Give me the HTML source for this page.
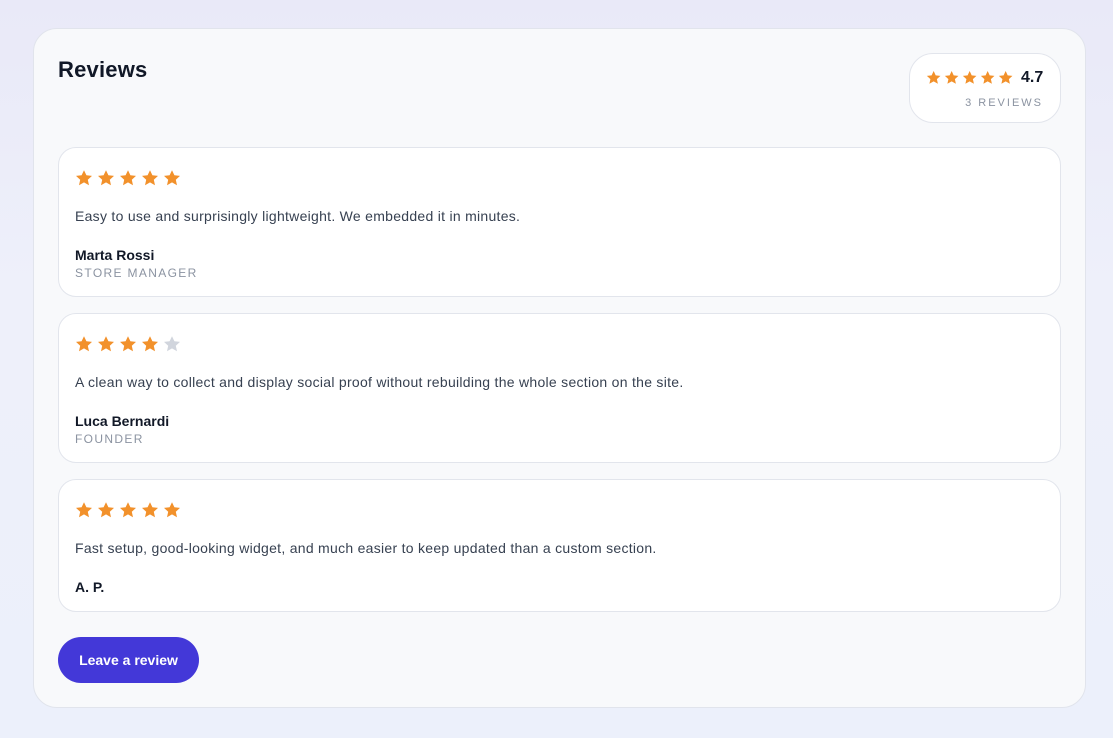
<!DOCTYPE html>
<html><head><meta charset="utf-8"><style>
*{margin:0;padding:0;box-sizing:border-box}
body{width:1113px;height:738px;overflow:hidden;font-family:"Liberation Sans",sans-serif;background:linear-gradient(180deg,#e9e9f8 0%,#eef0fa 40%,#ecf0fb 100%);position:relative}
.card{position:absolute;left:33px;top:28px;width:1053px;height:680px;background:#f8f9fb;border:1px solid #e1e4ec;border-radius:24px}
h1{position:absolute;left:58px;top:57px;font-size:22px;font-weight:bold;color:#111827;letter-spacing:0.2px}
.sum{position:absolute;left:909px;top:53px;width:152px;height:70px;background:#fff;border:1px solid #e2e5ec;border-radius:24px}
.rv{position:absolute;left:58px;width:1003px;background:#fff;border:1px solid #e2e5ec;border-radius:18px}
.t{position:absolute;left:16px;font-size:14px;color:#374151;letter-spacing:0.28px;top:60px}
.n{position:absolute;left:16px;font-size:14px;font-weight:bold;color:#111827;top:99px}
.r{position:absolute;left:16px;font-size:12px;letter-spacing:1.35px;color:#8b93a1;top:118px}
.btn{position:absolute;left:58px;top:637px;width:141px;height:46px;border-radius:23px;background:#4338d8;color:#fff;font-size:14px;font-weight:bold;text-align:center;line-height:47px}
</style></head><body>
<svg width="0" height="0" style="position:absolute"><defs><path id="s" d="M9 1.2l2.4 5.1 5.6.6-4.2 3.8 1.2 5.5L9 13.4 4 16.2l1.2-5.5L1 6.9l5.6-.6z"/></defs></svg>
<div class="card"></div>
<h1>Reviews</h1>
<div class="sum">
<svg style="position:absolute;left:16px;top:16px" width="92" height="18"><g fill="#f2912b"><use href="#s" transform="scale(.85)"/><use href="#s" transform="translate(18 0) scale(.85)"/><use href="#s" transform="translate(36 0) scale(.85)"/><use href="#s" transform="translate(54 0) scale(.85)"/><use href="#s" transform="translate(72 0) scale(.85)"/></g></svg>
<div style="position:absolute;left:111px;top:15px;font-size:16px;font-weight:bold;color:#111827">4.7</div>
<div style="position:absolute;right:17px;top:43px;font-size:11px;letter-spacing:2px;color:#8b93a1">3 REVIEWS</div>
</div>

<div class="rv" style="top:147px;height:150px">
<svg style="position:absolute;left:16px;top:21px" width="110" height="18"><g fill="#f2912b"><use href="#s"/><use href="#s" x="22"/><use href="#s" x="44"/><use href="#s" x="66"/><use href="#s" x="88"/></g></svg>
<div class="t">Easy to use and surprisingly lightweight. We embedded it in minutes.</div>
<div class="n">Marta Rossi</div>
<div class="r">STORE MANAGER</div>
</div>

<div class="rv" style="top:313px;height:150px">
<svg style="position:absolute;left:16px;top:21px" width="110" height="18"><g fill="#f2912b"><use href="#s"/><use href="#s" x="22"/><use href="#s" x="44"/><use href="#s" x="66"/></g><use href="#s" x="88" fill="#d1d5dd"/></svg>
<div class="t">A clean way to collect and display social proof without rebuilding the whole section on the site.</div>
<div class="n">Luca Bernardi</div>
<div class="r">FOUNDER</div>
</div>

<div class="rv" style="top:479px;height:133px">
<svg style="position:absolute;left:16px;top:21px" width="110" height="18"><g fill="#f2912b"><use href="#s"/><use href="#s" x="22"/><use href="#s" x="44"/><use href="#s" x="66"/><use href="#s" x="88"/></g></svg>
<div class="t">Fast setup, good-looking widget, and much easier to keep updated than a custom section.</div>
<div class="n">A. P.</div>
</div>

<div class="btn">Leave a review</div>
</body></html>
